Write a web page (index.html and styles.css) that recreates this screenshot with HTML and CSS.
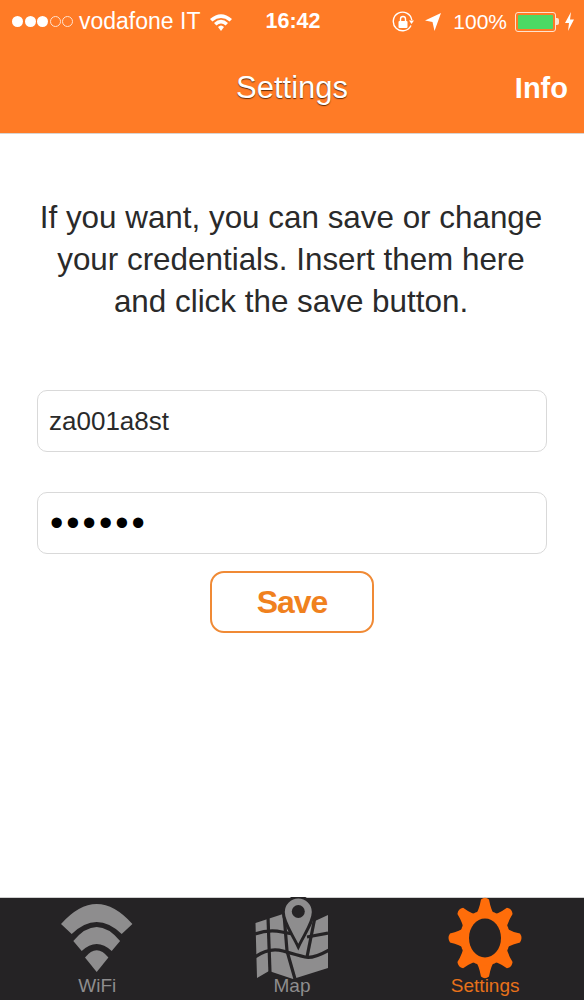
FILE: index.html
```html
<!DOCTYPE html>
<html lang="en">
<head>
    <meta charset="UTF-8">
    <meta name="viewport" content="width=device-width, initial-scale=1.0">
    <title>Settings</title>
    <link rel="stylesheet" href="styles.css">
</head>
<body>

<div class="app">
    <header class="header">
        <div class="status">
            <div class="status-left">
                <span class="signal">
                    <i class="dot"></i><i class="dot"></i><i class="dot"></i><i class="dot off"></i><i class="dot off"></i>
                </span>
                <span class="carrier">vodafone IT</span>
                <svg class="status-wifi" viewBox="0 0 22 18" width="22" height="18">
                    <path d="M0 6 Q11 -3.5 22 6 L19.6 8.4 Q11 1.5 2.4 8.4 Z" fill="#fff"/>
                    <path d="M4 10 Q11 3.5 18 10 L15.6 12.4 Q11 8.5 6.4 12.4 Z" fill="#fff"/>
                    <path d="M8 14 Q11 11 14 14 L11 18 Z" fill="#fff"/>
                </svg>
            </div>
            <div class="time">16:42</div>
            <div class="status-right">
                <svg class="lock" viewBox="0 0 22 22" width="22" height="22">
                    <path d="M19 14.5 A9.3 9.3 0 1 1 19.8 9" fill="none" stroke="#fff" stroke-width="1.4"/>
                    <path d="M17 9.5 L22 9.5 L19.5 13 Z" fill="#fff"/>
                    <rect x="6.5" y="10" width="9" height="7" rx="1" fill="#fff"/>
                    <path d="M8.5 10 V8 A2.5 2.5 0 0 1 13.5 8 V10" fill="none" stroke="#fff" stroke-width="1.4"/>
                </svg>
                <svg class="arrow" viewBox="0 0 16 18" width="16" height="18">
                    <path d="M16 0 L9.5 18 L7.5 9 L0 7.5 Z" fill="#fff"/>
                </svg>
                <span class="percent">100%</span>
                <span class="battery"><span class="battery-fill"></span></span>
                <span class="battery-nib"></span>
                <svg class="bolt" viewBox="0 0 9 19" width="9" height="19">
                    <path d="M6 0 L0 11 L4 11 L3 19 L9 7.5 L5 7.5 Z" fill="#fff"/>
                </svg>
            </div>
        </div>
        <nav class="navbar">
            <span class="nav-side"></span>
            <h1 class="nav-title">Settings</h1>
            <a class="nav-side nav-info">Info</a>
        </nav>
    </header>

    <main class="content">
        <p class="intro">If you want, you can save or change your credentials. Insert them here and click the save button.</p>
        <form class="form">
            <input class="field" type="text" value="za001a8st">
            <input class="field field-pass" type="password" value="secret">
            <button class="save" type="button">Save</button>
        </form>
    </main>

    <footer class="tabbar">
        <div class="tab">
            <svg class="tab-icon wifi-icon" viewBox="0 0 72 68" width="72" height="68">
                <path d="M0 20 Q35.7 -20 71.4 20 L60.7 30 Q35.7 6 10.7 30 Z"/>
                <path d="M12.3 37 Q35.7 9 59.1 37 L50.7 47 Q35.7 33 20.7 47 Z"/>
                <path d="M24 53.6 Q35.7 39 47.4 53.6 L35.7 68 Z"/>
            </svg>
            <span class="tab-label">WiFi</span>
        </div>
        <div class="tab">
            <svg class="tab-icon map-icon" viewBox="0 0 73 82" width="73" height="82">
                <path d="M0.5 26 L28 17 L60 24 L73 18 L73 71 L38 82 L14 74 L2 81 Z"/>
                <g fill="none" stroke="#252325" stroke-width="3.2">
                    <path d="M0 37 Q14 32 27 35 T50 36"/>
                    <path d="M0 60 Q14 50 28 54 T50 60 T74 53"/>
                    <path d="M13 20 L15 76"/>
                    <path d="M29 17 L32 54 L40 82"/>
                    <path d="M60 20 L52 60"/>
                    <path d="M52 40 L73 36"/>
                </g>
                <path d="M43.3 0 A15 15 0 0 1 58.3 15 C58.3 25 50 36 43.3 50 C36.6 36 28.3 25 28.3 15 A15 15 0 0 1 43.3 0 Z" stroke="#252325" stroke-width="3"/>
                <circle cx="43.3" cy="14.5" r="6.5" fill="#252325"/>
            </svg>
            <span class="tab-label">Map</span>
        </div>
        <div class="tab tab-active">
            <svg class="tab-icon gear-icon" viewBox="0 0 74 82" width="74" height="82">
                <g transform="translate(37 41) scale(1 1.1)">
                    <path d="M-10 -20 Q-6 -25 -4 -35 Q0 -38 4 -35 Q6 -25 10 -20 Z"/>
                    <path d="M-10 -20 Q-6 -25 -4 -35 Q0 -38 4 -35 Q6 -25 10 -20 Z" transform="rotate(45)"/>
                    <path d="M-10 -20 Q-6 -25 -4 -35 Q0 -38 4 -35 Q6 -25 10 -20 Z" transform="rotate(90)"/>
                    <path d="M-10 -20 Q-6 -25 -4 -35 Q0 -38 4 -35 Q6 -25 10 -20 Z" transform="rotate(135)"/>
                    <path d="M-10 -20 Q-6 -25 -4 -35 Q0 -38 4 -35 Q6 -25 10 -20 Z" transform="rotate(180)"/>
                    <path d="M-10 -20 Q-6 -25 -4 -35 Q0 -38 4 -35 Q6 -25 10 -20 Z" transform="rotate(225)"/>
                    <path d="M-10 -20 Q-6 -25 -4 -35 Q0 -38 4 -35 Q6 -25 10 -20 Z" transform="rotate(270)"/>
                    <path d="M-10 -20 Q-6 -25 -4 -35 Q0 -38 4 -35 Q6 -25 10 -20 Z" transform="rotate(315)"/>
                    <circle r="25"/>
                    <ellipse rx="16" ry="17.7" fill="#252325"/>
                </g>
            </svg>
            <span class="tab-label">Settings</span>
        </div>
    </footer>
</div>

</body>
</html>
```

FILE: styles.css
```css
body {
    font-family: 'Liberation Sans', Arial, sans-serif;
    background: #fff;
    color: #2a2a2a;
    margin: 0;
}
.app {
    display: flex;
    flex-direction: column;
    height: 1000px;
    overflow: hidden;
}

/* header */
.header {
    height: 133px;
    background: #ff7b26;
    border-bottom: 1px solid #d9d4d0;
    color: #fff;
    flex: none;
}
.status {
    display: grid;
    grid-template-columns: 1fr auto 1fr;
    align-items: center;
    height: 43px;
    padding: 0 10px 0 12px;
}
.status-left, .status-right {
    display: flex;
    align-items: center;
}
.status-right {
    justify-content: flex-end;
}
.signal {
    display: flex;
    gap: 1.5px;
}
.dot {
    width: 11px;
    height: 11px;
    border-radius: 50%;
    background: #fff;
    box-sizing: border-box;
}
.dot.off {
    background: none;
    border: 1px solid #ffe3cf;
}
.carrier {
    font-size: 23px;
    margin-left: 6px;
}
.status-wifi {
    margin-left: 10px;
}
.time {
    font-size: 21.5px;
    font-weight: bold;
}
.arrow {
    margin-left: 11px;
}
.percent {
    font-size: 21px;
    margin-left: 12px;
}
.battery {
    display: block;
    box-sizing: border-box;
    width: 41px;
    height: 20px;
    margin-left: 8px;
    padding: 2px;
    border: 1px solid #ffe3cf;
    border-radius: 3px;
}
.battery-fill {
    display: block;
    height: 100%;
    background: #4cd964;
    border-radius: 1px;
}
.battery-nib {
    width: 3px;
    height: 7px;
    background: #ffe3cf;
    border-radius: 0 2px 2px 0;
}
.bolt {
    margin-left: 6px;
}
.navbar {
    display: flex;
    justify-content: space-between;
    align-items: center;
    height: 90px;
    padding: 0 16px;
}
.nav-side {
    width: 60px;
    text-align: right;
}
.nav-title {
    margin: 0;
    font-size: 31px;
    font-weight: normal;
    text-shadow: 0 1px 1px rgba(70, 30, 0, 0.85);
}
.nav-info {
    font-size: 29px;
    font-weight: bold;
}

/* form */
.content {
    flex: 1;
    padding: 63px 37px 0;
}
.intro {
    margin: 0 0 0 -2px;
    font-size: 31.4px;
    line-height: 42px;
    text-align: center;
}
.form {
    display: flex;
    flex-direction: column;
    align-items: center;
    margin-top: 67px;
}
.field {
    box-sizing: border-box;
    width: 100%;
    height: 62px;
    margin-bottom: 40px;
    padding: 0 11px;
    border: 1px solid #d9d9d9;
    border-radius: 10px;
    background: #fff;
    color: #2a2a2a;
    font-family: 'Liberation Sans', Arial, sans-serif;
    font-size: 26px;
    outline: none;
}
.field-pass {
    margin-bottom: 17px;
    padding: 0 12px;
    color: #000;
    font-size: 38px;
    letter-spacing: 3px;
}
.save {
    width: 164px;
    height: 62px;
    border: 2px solid #f08a35;
    border-radius: 14px;
    background: #fff;
    color: #f0811e;
    font-family: 'Liberation Sans', Arial, sans-serif;
    font-size: 32px;
    font-weight: bold;
    letter-spacing: -1px;
}

/* tabs */
.tabbar {
    display: grid;
    grid-template-columns: repeat(3, 1fr);
    height: 103px;
    background: #252325;
    border-top: 1px solid #cfcfcf;
    flex: none;
    margin-bottom: -1px;
}
.tab {
    display: flex;
    flex-direction: column;
    align-items: center;
    height: 103px;
    color: #8e8d8e;
}
.tab-icon {
    display: block;
    flex: none;
    fill: #8e8d8e;
}
.wifi-icon {
    margin-top: 6px;
    margin-bottom: 3px;
}
.map-icon {
    margin-top: -1px;
    margin-bottom: -4px;
}
.gear-icon {
    margin-top: -1px;
    margin-bottom: -4px;
    fill: #ff6d0a;
}
.tab-label {
    font-size: 19px;
    line-height: 22px;
}
.tab-active {
    color: #e8711a;
    padding-right: 3px;
}
```
